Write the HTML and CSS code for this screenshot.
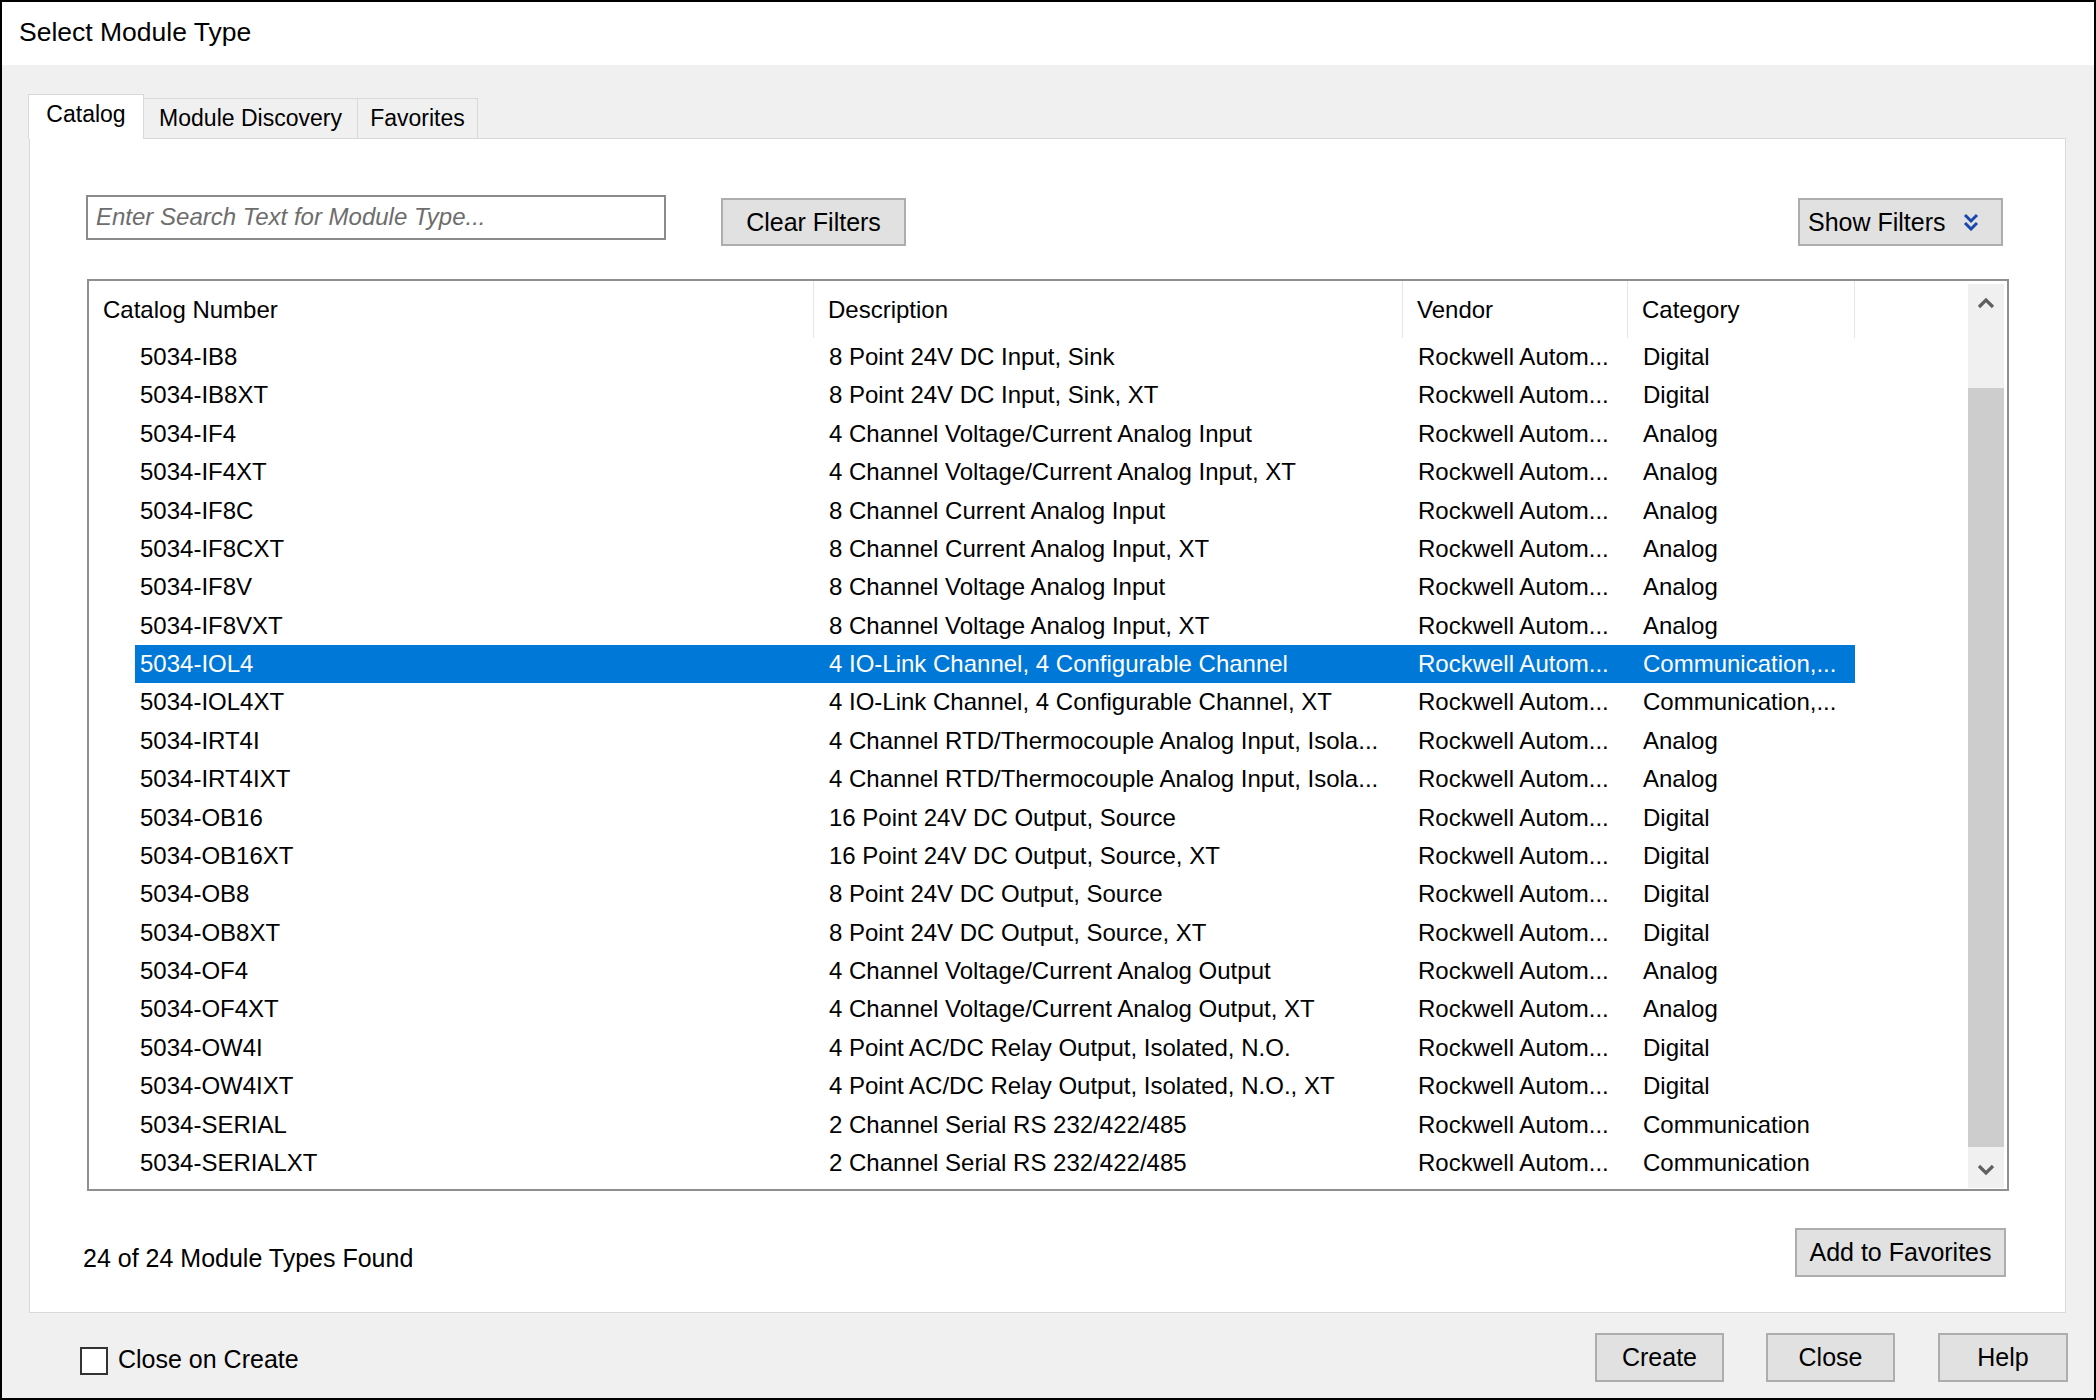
FILE: index.html
```html
<!DOCTYPE html>
<html lang="en">
  <head>
    <meta charset="UTF-8" />
    <meta name="viewport" content="width=device-width, initial-scale=1.0" />
    <title>Select Module Type</title>
    <link rel="stylesheet" href="styles.css">
  </head>
  <body>
    <div class="window">
      <div class="titlebar">Select Module Type</div>

      <div class="content">
        <div class="tabs">
          <div class="tab tab-catalog active">Catalog</div>
          <div class="tab tab-discovery">Module Discovery</div>
          <div class="tab tab-favorites">Favorites</div>
        </div>

        <div class="panel">
          <div class="search-row">
            <div class="search-box">Enter Search Text for Module Type...</div>
            <button class="btn btn-clear">Clear Filters</button>
            <div class="spacer"></div>
            <button class="btn btn-show">
              Show Filters
              <svg class="dbl-chevron" width="16" height="18" viewBox="0 0 16 18">
                <polyline points="2,2 8,8 14,2" />
                <polyline points="2,10 8,16 14,10" />
              </svg>
            </button>
          </div>

          <div class="listview">
            <div class="list-main">
              <div class="list-header">
                <div class="hcell">Catalog Number</div>
                <div class="hcell">Description</div>
                <div class="hcell">Vendor</div>
                <div class="hcell">Category</div>
                <div class="hcell hcell-last"></div>
              </div>

              <div class="rows">
                <div class="row"><div class="cell c-num">5034-IB8</div><div class="cell">8 Point 24V DC Input, Sink</div><div class="cell">Rockwell Autom...</div><div class="cell">Digital</div></div>
                <div class="row"><div class="cell c-num">5034-IB8XT</div><div class="cell">8 Point 24V DC Input, Sink, XT</div><div class="cell">Rockwell Autom...</div><div class="cell">Digital</div></div>
                <div class="row"><div class="cell c-num">5034-IF4</div><div class="cell">4 Channel Voltage/Current Analog Input</div><div class="cell">Rockwell Autom...</div><div class="cell">Analog</div></div>
                <div class="row"><div class="cell c-num">5034-IF4XT</div><div class="cell">4 Channel Voltage/Current Analog Input, XT</div><div class="cell">Rockwell Autom...</div><div class="cell">Analog</div></div>
                <div class="row"><div class="cell c-num">5034-IF8C</div><div class="cell">8 Channel Current Analog Input</div><div class="cell">Rockwell Autom...</div><div class="cell">Analog</div></div>
                <div class="row"><div class="cell c-num">5034-IF8CXT</div><div class="cell">8 Channel Current Analog Input, XT</div><div class="cell">Rockwell Autom...</div><div class="cell">Analog</div></div>
                <div class="row"><div class="cell c-num">5034-IF8V</div><div class="cell">8 Channel Voltage Analog Input</div><div class="cell">Rockwell Autom...</div><div class="cell">Analog</div></div>
                <div class="row"><div class="cell c-num">5034-IF8VXT</div><div class="cell">8 Channel Voltage Analog Input, XT</div><div class="cell">Rockwell Autom...</div><div class="cell">Analog</div></div>
                <div class="row selected"><div class="cell c-num">5034-IOL4</div><div class="cell">4 IO-Link Channel, 4 Configurable Channel</div><div class="cell">Rockwell Autom...</div><div class="cell">Communication,...</div></div>
                <div class="row"><div class="cell c-num">5034-IOL4XT</div><div class="cell">4 IO-Link Channel, 4 Configurable Channel, XT</div><div class="cell">Rockwell Autom...</div><div class="cell">Communication,...</div></div>
                <div class="row"><div class="cell c-num">5034-IRT4I</div><div class="cell">4 Channel RTD/Thermocouple Analog Input, Isola...</div><div class="cell">Rockwell Autom...</div><div class="cell">Analog</div></div>
                <div class="row"><div class="cell c-num">5034-IRT4IXT</div><div class="cell">4 Channel RTD/Thermocouple Analog Input, Isola...</div><div class="cell">Rockwell Autom...</div><div class="cell">Analog</div></div>
                <div class="row"><div class="cell c-num">5034-OB16</div><div class="cell">16 Point 24V DC Output, Source</div><div class="cell">Rockwell Autom...</div><div class="cell">Digital</div></div>
                <div class="row"><div class="cell c-num">5034-OB16XT</div><div class="cell">16 Point 24V DC Output, Source, XT</div><div class="cell">Rockwell Autom...</div><div class="cell">Digital</div></div>
                <div class="row"><div class="cell c-num">5034-OB8</div><div class="cell">8 Point 24V DC Output, Source</div><div class="cell">Rockwell Autom...</div><div class="cell">Digital</div></div>
                <div class="row"><div class="cell c-num">5034-OB8XT</div><div class="cell">8 Point 24V DC Output, Source, XT</div><div class="cell">Rockwell Autom...</div><div class="cell">Digital</div></div>
                <div class="row"><div class="cell c-num">5034-OF4</div><div class="cell">4 Channel Voltage/Current Analog Output</div><div class="cell">Rockwell Autom...</div><div class="cell">Analog</div></div>
                <div class="row"><div class="cell c-num">5034-OF4XT</div><div class="cell">4 Channel Voltage/Current Analog Output, XT</div><div class="cell">Rockwell Autom...</div><div class="cell">Analog</div></div>
                <div class="row"><div class="cell c-num">5034-OW4I</div><div class="cell">4 Point AC/DC Relay Output, Isolated, N.O.</div><div class="cell">Rockwell Autom...</div><div class="cell">Digital</div></div>
                <div class="row"><div class="cell c-num">5034-OW4IXT</div><div class="cell">4 Point AC/DC Relay Output, Isolated, N.O., XT</div><div class="cell">Rockwell Autom...</div><div class="cell">Digital</div></div>
                <div class="row"><div class="cell c-num">5034-SERIAL</div><div class="cell">2 Channel Serial RS 232/422/485</div><div class="cell">Rockwell Autom...</div><div class="cell">Communication</div></div>
                <div class="row"><div class="cell c-num">5034-SERIALXT</div><div class="cell">2 Channel Serial RS 232/422/485</div><div class="cell">Rockwell Autom...</div><div class="cell">Communication</div></div>
              </div>
            </div>

            <div class="scrollbar">
              <div class="sb-btn">
                <svg width="18" height="12" viewBox="0 0 18 12"><polyline points="2,10 9,3 16,10" /></svg>
              </div>
              <div class="sb-track">
                <div class="sb-thumb"></div>
              </div>
              <div class="sb-btn">
                <svg width="18" height="12" viewBox="0 0 18 12"><polyline points="2,2 9,9 16,2" /></svg>
              </div>
            </div>
          </div>

          <div class="panel-bottom">
            <div class="found">24 of 24 Module Types Found</div>
            <button class="btn btn-fav">Add to Favorites</button>
          </div>
        </div>
      </div>

      <div class="footer">
        <div class="checkbox"></div>
        <div class="check-label">Close on Create</div>
        <div class="spacer"></div>
        <button class="btn btn-dlg">Create</button>
        <button class="btn btn-dlg">Close</button>
        <button class="btn btn-dlg btn-help">Help</button>
      </div>
    </div>
  </body>
</html>
```

FILE: styles.css
```css
body {
  margin: 0;
  font-family: "Liberation Sans", Arial, sans-serif;
  color: #000;
}

.window {
  width: 2096px;
  height: 1400px;
  box-sizing: border-box;
  border: 2px solid #000;
  background-color: #f0f0f0;
  display: flex;
  flex-direction: column;
}

.titlebar {
  height: 63px;
  background-color: #fff;
  display: flex;
  align-items: center;
  padding-left: 17px;
  padding-bottom: 2px;
  box-sizing: border-box;
  font-size: 26.5px;
}

.content {
  padding: 29px 28px 0 27px;
}

.tabs {
  display: flex;
  align-items: flex-end;
  margin-left: -1px;
}

.tab {
  box-sizing: border-box;
  height: 40px;
  border: 1px solid #d9d9d9;
  border-bottom: none;
  background-color: #f0f0f0;
  font-size: 23px;
  display: flex;
  align-items: center;
  justify-content: center;
}

.tab + .tab {
  border-left: none;
}

.tab.active {
  height: 45px;
  margin-bottom: -1px;
  background-color: #fff;
  position: relative;
  z-index: 1;
  padding-bottom: 5px;
}

.tab-catalog {
  width: 116px;
}

.tab-discovery {
  width: 214px;
}

.tab-favorites {
  width: 120px;
}

.panel {
  height: 1175px;
  box-sizing: border-box;
  border: 1px solid #d9d9d9;
  background-color: #fff;
  padding: 56px 56px 0 57px;
  display: flex;
  flex-direction: column;
}

.search-row {
  display: flex;
  align-items: flex-start;
  height: 51px;
}

.search-box {
  width: 580px;
  height: 45px;
  box-sizing: border-box;
  margin-left: -1px;
  border: 2px solid #8a8a8a;
  background-color: #fff;
  padding-left: 8px;
  padding-bottom: 2px;
  font-size: 24px;
  font-style: italic;
  color: #6d6d6d;
  display: flex;
  align-items: center;
}

.spacer {
  flex: 1;
}

.btn {
  font-family: "Liberation Sans", Arial, sans-serif;
  font-size: 25px;
  color: #000;
  background-color: #e1e1e1;
  border: 2px solid #adadad;
  height: 49px;
  box-sizing: border-box;
  padding: 0;
  display: flex;
  align-items: center;
  justify-content: center;
}

.btn-clear {
  width: 185px;
  height: 48px;
  margin-top: 3px;
  margin-left: 55px;
}

.btn-show {
  width: 205px;
  height: 48px;
  margin-top: 3px;
  margin-right: 6px;
  justify-content: flex-start;
  padding-left: 8px;
}

.dbl-chevron {
  margin-left: 17px;
}

.dbl-chevron polyline {
  fill: none;
  stroke: #1a46b0;
  stroke-width: 3;
}

.listview {
  margin-top: 33px;
  height: 912px;
  box-sizing: border-box;
  border: 2px solid #8f8f8f;
  display: flex;
}

.list-main {
  flex: 1;
  display: flex;
  flex-direction: column;
}

.list-header {
  display: grid;
  grid-template-columns: 725px 589px 225px 227px 1fr;
  height: 57px;
}

.hcell {
  font-size: 24px;
  border-right: 1px solid #e5e5e5;
  display: flex;
  align-items: center;
  padding-left: 14px;
  white-space: nowrap;
}

.hcell-last {
  border-right: none;
}

.rows {
  padding-left: 46px;
  width: 1720px;
}

.row {
  display: grid;
  grid-template-columns: 694px 589px 225px 1fr;
  height: 38.38px;
  line-height: 38.38px;
  font-size: 24px;
  white-space: nowrap;
}

.row.selected {
  background-color: #0078d7;
  color: #fff;
}

.cell {
  overflow: hidden;
}

.c-num {
  padding-left: 5px;
}

.scrollbar {
  width: 36px;
  margin: 3px 3px 1px 0;
  background-color: #f0f0f0;
  display: flex;
  flex-direction: column;
}

.sb-btn {
  height: 37px;
  display: flex;
  align-items: center;
  justify-content: center;
}

.sb-btn polyline {
  fill: none;
  stroke: #606060;
  stroke-width: 3.2;
}

.sb-track {
  flex: 1;
  padding-top: 67px;
}

.sb-thumb {
  height: 759px;
  background-color: #cdcdcd;
}

.panel-bottom {
  display: flex;
  align-items: center;
  margin-top: 37px;
}

.found {
  font-size: 25px;
  margin-left: -4px;
  padding-top: 12px;
}

.btn-fav {
  margin-left: auto;
  width: 211px;
  margin-right: 3px;
}

.footer {
  flex: 1;
  display: flex;
  align-items: center;
  padding: 4px 26px 0 78px;
}

.checkbox {
  width: 28px;
  height: 28px;
  box-sizing: border-box;
  border: 2px solid #333;
  background-color: #fff;
  margin-top: 6px;
}

.check-label {
  font-size: 25px;
  margin-left: 10px;
  padding-top: 4px;
}

.btn-dlg {
  width: 129px;
  margin-left: 42px;
}

.btn-help {
  width: 130px;
  margin-left: 43px;
}
```
